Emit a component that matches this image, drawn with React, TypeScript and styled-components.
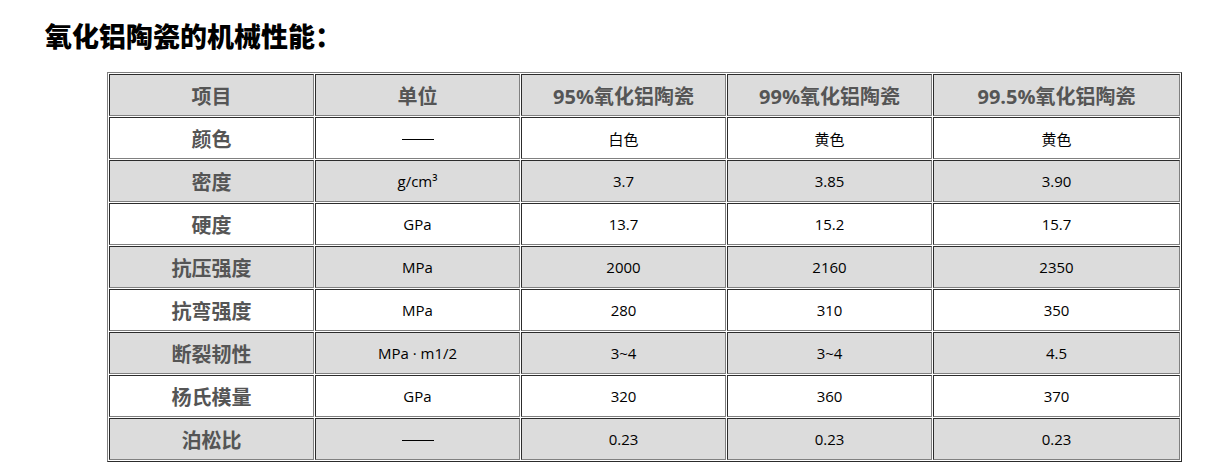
import React from 'react';
import styled, { createGlobalStyle } from 'styled-components';

const GlobalStyle = createGlobalStyle`
    body {
        margin: 0;
        background: #fff;
        font-family: "Open Sans", "Noto Sans CJK SC", sans-serif;
        color: #000;
    }
`;

const Page = styled.main`
    padding: 14px 0 0 45px;
`;

const Title = styled.h2`
    margin: 0 0 14px;
    font-size: 27px;
    line-height: 44px;
    font-weight: 800;
    font-family: "Noto Sans CJK SC", sans-serif;
    color: #000;
`;

const Table = styled.table`
    margin-left: 62px;
    border: 1px outset #808080;
    border-spacing: 1px;
    table-layout: fixed;
    width: 1075px;
`;

type RowProps = {
    shaded: boolean
};

const Row = styled.tr<RowProps>`
    background: ${(props) => props.shaded ? '#dcdcdc' : '#fff'};
`;

const Cell = styled.td`
    border: 1px inset #808080;
    height: 40px;
    padding: 0;
    text-align: center;
    vertical-align: middle;
    font-size: 15px;
    color: #000;
`;

const HeadCell = styled(Cell)`
    font-size: 20px;
    font-weight: 700;
    color: #555;
`;

const Dash = styled.span`
    display: inline-block;
    width: 32px;
    height: 1px;
    background: #000;
    vertical-align: middle;
`;

const header = ['项目', '单位', '95%氧化铝陶瓷', '99%氧化铝陶瓷', '99.5%氧化铝陶瓷'];

const rows: string[][] = [
    ['颜色', '—', '白色', '黄色', '黄色'],
    ['密度', 'g/cm³', '3.7', '3.85', '3.90'],
    ['硬度', 'GPa', '13.7', '15.2', '15.7'],
    ['抗压强度', 'MPa', '2000', '2160', '2350'],
    ['抗弯强度', 'MPa', '280', '310', '350'],
    ['断裂韧性', 'MPa · m1/2', '3~4', '3~4', '4.5'],
    ['杨氏模量', 'GPa', '320', '360', '370'],
    ['泊松比', '—', '0.23', '0.23', '0.23'],
];

export default function App() {
    return (<>
        <GlobalStyle />
        <Page>
            <Title>氧化铝陶瓷的机械性能：</Title>
            <Table>
                <colgroup>
                    <col style={{ width: 205 }} />
                    <col style={{ width: 205 }} />
                    <col style={{ width: 205 }} />
                    <col style={{ width: 205 }} />
                    <col />
                </colgroup>
                <tbody>
                    <Row shaded>
                        {header.map(h => (<HeadCell key={h}>{h}</HeadCell>))}
                    </Row>
                    {rows.map((row, i) => (
                        <Row key={row[0]} shaded={i % 2 === 1}>
                            <HeadCell>{row[0]}</HeadCell>
                            {row.slice(1).map((v, j) => (
                                <Cell key={j}>{v === '—' ? <Dash /> : v}</Cell>
                            ))}
                        </Row>
                    ))}
                </tbody>
            </Table>
        </Page>
    </>);
}
